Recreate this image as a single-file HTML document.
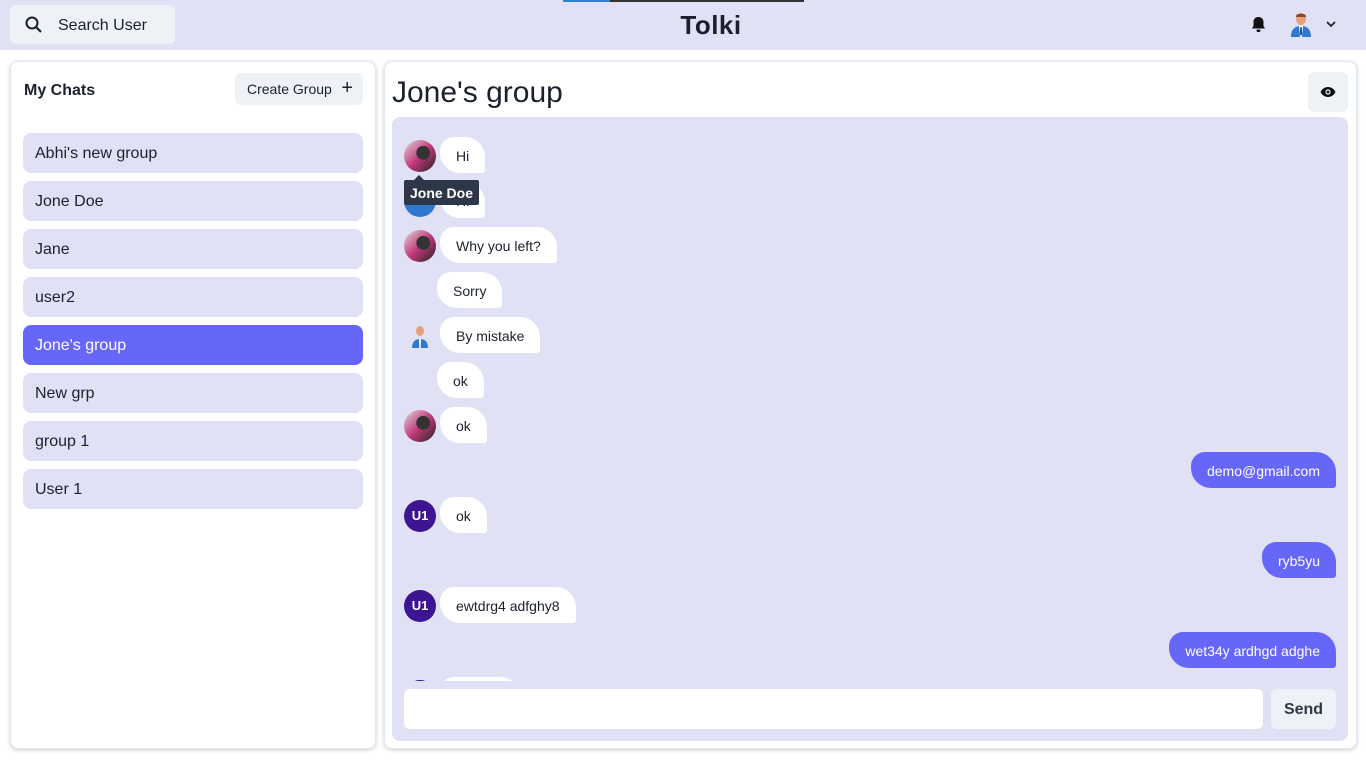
<!DOCTYPE html>
<html><head><meta charset="utf-8"><style>
*{box-sizing:border-box;margin:0;padding:0}
body{width:1366px;height:768px;background:#fff;font-family:"Liberation Sans",sans-serif;position:relative;overflow:hidden;color:#1a202c}
.hdr{position:absolute;left:0;top:0;width:1366px;height:50px;background:#e1e1f5}
.search{position:absolute;left:10px;top:5px;width:165px;height:39px;background:#edf2f7;border-radius:6px;font-size:16px;line-height:41px;padding-left:48px}
.title{position:absolute;left:0;width:1422px;top:10px;text-align:center;font-size:26px;font-weight:bold;letter-spacing:0.5px}
.bar1{position:absolute;left:563px;top:0;width:47px;height:2px;background:#3182ce}
.bar2{position:absolute;left:610px;top:0;width:194px;height:2px;background:#333}
.panel{position:absolute;background:#fff;border-radius:8px;box-shadow:0 1px 4px rgba(0,0,0,.2);border:1px solid #e2e8f0}
.item{position:absolute;left:12px;width:340px;height:40px;border-radius:8px;background:#e1e1f5;font-size:16px;line-height:42px;padding-left:12px}
.item.act{background:#6667f8;color:#fff}
.chat{position:absolute;left:392px;top:117px;width:956px;height:624px;background:#e1e1f5;border-radius:8px;overflow:hidden}
.b{position:absolute;height:36px;line-height:38px;font-size:14px;background:#fff;padding:0 16px;border-radius:14px 20px 3px 20px}
.b.r{background:#6667f8;color:#fff;right:12px}
.av{position:absolute;left:12px;width:32px;height:32px;border-radius:50%}
.u1{background:#3d1592;color:#fff;font-size:13px;font-weight:bold;text-align:center;line-height:32px}
.ph{background:radial-gradient(circle at 60% 40%,#333 0 25%,transparent 26%),linear-gradient(135deg,#ddd,#c43a7a 50%,#222)}
</style></head><body>
<div class="hdr">
<div class="search">Search User</div>
<svg style="position:absolute;left:25px;top:16px" width="18" height="18" viewBox="0 0 18 18"><circle cx="7" cy="7" r="5.5" fill="none" stroke="#1a202c" stroke-width="2"/><path d="M11 11l5 5" stroke="#1a202c" stroke-width="2.2"/></svg>
<div class="title">Tolki</div>
<div class="bar1"></div><div class="bar2"></div>
<svg style="position:absolute;left:1251px;top:16px" width="15" height="17" viewBox="0 0 15 17"><path d="M7.5 1c-3 0-5 2-5 5v4L1 12.5h13L12.5 10V6c0-3-2-5-5-5z" fill="#111"/><rect x="5.5" y="13.5" width="4" height="2.5" rx="1.2" fill="#111"/></svg>
<svg style="position:absolute;left:1289px;top:12px" width="24" height="26" viewBox="0 0 24 26"><ellipse cx="12" cy="7" rx="5" ry="6" fill="#e8a07a"/><path d="M7 4c0-3 10-3 10 0v1H7z" fill="#8a4a2a"/><path d="M2 25c0-8 4-11 10-11s10 3 10 11z" fill="#2f7ad0"/><path d="M10 14h4l-1 11h-2z" fill="#fff"/><path d="M11.3 15h1.4l.5 7-1.2 2-1.2-2z" fill="#1d4f99"/></svg>
<svg style="position:absolute;left:1326px;top:21px" width="10" height="7" viewBox="0 0 10 7"><path d="M1 1l4 4 4-4" fill="none" stroke="#222" stroke-width="1.8"/></svg>
</div>

<div class="panel" style="left:10px;top:61px;width:366px;height:688px">
<div style="position:absolute;left:13px;top:20px;font-size:16px;font-weight:bold">My Chats</div>
<div style="position:absolute;left:224px;top:11px;width:128px;height:32px;background:#edf2f7;border-radius:6px;font-size:14px;line-height:33px;padding-left:12px">Create Group <span style="font-size:20px;position:absolute;right:10px;top:-1px">+</span></div>
<div class="item" style="top:71px">Abhi's new group</div>
<div class="item" style="top:119px">Jone Doe</div>
<div class="item" style="top:167px">Jane</div>
<div class="item" style="top:215px">user2</div>
<div class="item act" style="top:263px">Jone's group</div>
<div class="item" style="top:311px">New grp</div>
<div class="item" style="top:359px">group 1</div>
<div class="item" style="top:407px">User 1</div>
</div>

<div class="panel" style="left:384px;top:61px;width:973px;height:688px">
<div style="position:absolute;left:7px;top:14px;font-size:30px">Jone's group</div>
<div style="position:absolute;right:8px;top:10px;width:40px;height:40px;background:#edf2f7;border-radius:6px"><svg style="position:absolute;left:12px;top:14px" width="16" height="12" viewBox="0 0 16 12"><path d="M8 1C4 1 1.5 4 .5 6c1 2 3.5 5 7.5 5s6.5-3 7.5-5C14.5 4 12 1 8 1z" fill="#111"/><circle cx="8" cy="6" r="2.6" fill="#edf2f7"/><circle cx="8" cy="6" r="1.4" fill="#111"/></svg></div>
</div>

<div class="chat">
<div class="av ph" style="top:23px"></div><div class="b" style="left:48px;top:20px">Hi</div>
<div class="av" style="top:68px;background:#2f7ad0"></div><div class="b" style="left:48px;top:65px">Hi</div>
<div style="position:absolute;left:12px;top:63px;width:75px;height:25px;background:#2d3748;color:#fff;font-size:14px;font-weight:bold;line-height:26px;text-align:center;border-radius:2px">Jone Doe</div>
<div style="position:absolute;left:22px;top:58px;border:5px solid transparent;border-bottom-color:#2d3748;border-top:0"></div>
<div class="av ph" style="top:113px"></div><div class="b" style="left:48px;top:110px">Why you left?</div>
<div class="b" style="left:45px;top:155px">Sorry</div>
<svg class="av" style="top:203px" width="32" height="32" viewBox="0 0 32 32"><ellipse cx="16" cy="11" rx="4" ry="5" fill="#e8a07a"/><path d="M8 28c0-6 3-9 8-9s8 3 8 9z" fill="#2f7ad0"/><path d="M15 19h2l-.3 9h-1.4z" fill="#fff"/></svg>
<div class="b" style="left:48px;top:200px">By mistake</div>
<div class="b" style="left:45px;top:245px">ok</div>
<div class="av ph" style="top:293px"></div><div class="b" style="left:48px;top:290px">ok</div>
<div class="b r" style="top:335px">demo@gmail.com</div>
<div class="av u1" style="top:383px">U1</div><div class="b" style="left:48px;top:380px">ok</div>
<div class="b r" style="top:425px">ryb5yu</div>
<div class="av u1" style="top:473px">U1</div><div class="b" style="left:48px;top:470px">ewtdrg4 adfghy8</div>
<div class="b r" style="top:515px">wet34y ardhgd adghe</div>
<div class="av u1" style="top:563px"></div><div class="b" style="left:48px;top:560px;width:80px"></div>
<div style="position:absolute;left:0;top:564px;width:956px;height:60px;background:#e1e1f5"></div>
<div style="position:absolute;left:12px;top:572px;width:859px;height:40px;background:#fff;border-radius:6px"></div>
<div style="position:absolute;left:879px;top:572px;width:65px;height:40px;background:#edf2f7;border-radius:6px;font-size:16px;font-weight:bold;line-height:42px;text-align:center;color:#2d3748">Send</div>
</div>
</body></html>
